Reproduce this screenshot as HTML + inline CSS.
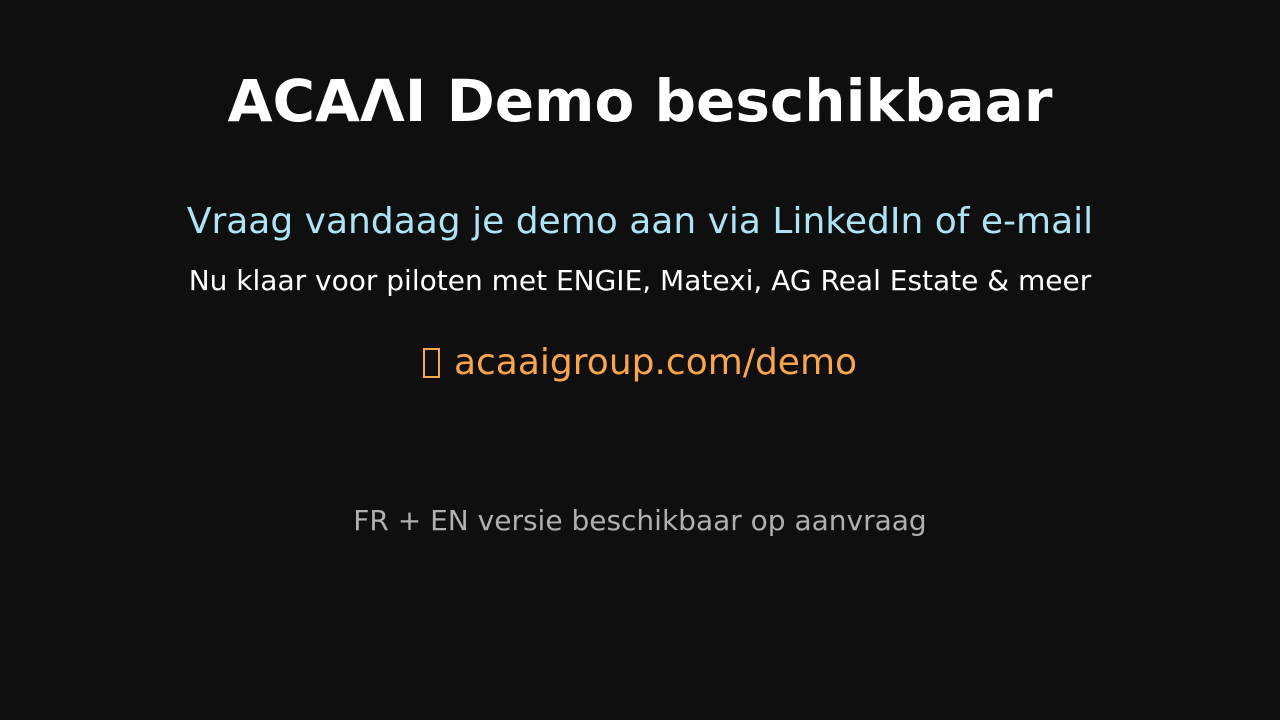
<!DOCTYPE html>
<html><head><meta charset="utf-8"><style>
html,body{margin:0;padding:0;background:#0f0f0f;width:1280px;height:720px;overflow:hidden}
div{position:absolute;left:0;width:1280px;text-align:center;font-family:"DejaVu Sans","Liberation Sans",sans-serif;white-space:nowrap;line-height:1}
.t{top:72px;font-size:58px;font-weight:bold;color:#fff}
.s{top:204px;font-size:36px;color:#aee4f5}
.n{top:267px;font-size:28px;color:#fff}
.u{top:345px;font-size:36px;color:#f9a54e}
.b{display:inline-block;width:17px;height:30px;border:2px solid #f9a54e;box-sizing:border-box;vertical-align:-4px;margin-right:14px}
.f{top:507px;font-size:28px;color:#b0b0b0}
</style></head><body>
<div class="t">ACAΛI Demo beschikbaar</div>
<div class="s">Vraag vandaag je demo aan via LinkedIn of e-mail</div>
<div class="n">Nu klaar voor piloten met ENGIE, Matexi, AG Real Estate &amp; meer</div>
<div class="u"><span class="b"></span>acaaigroup.com/demo</div>
<div class="f">FR + EN versie beschikbaar op aanvraag</div>
</body></html>
